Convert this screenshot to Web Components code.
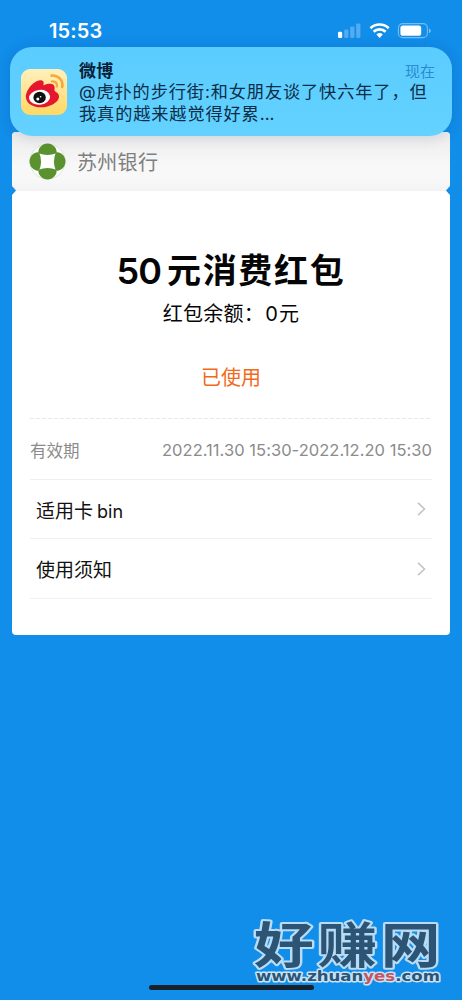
<!DOCTYPE html>
<html lang="zh-CN">
<head>
<meta charset="utf-8">
<title>消费红包</title>
<style>
html, body { margin: 0; height: 100%; overflow: hidden; background: #118dea; }
body { font-family: Inter, "Noto Sans CJK SC", sans-serif; }
</style>
</head>
<body>
<coupon-screen></coupon-screen>
<script>
const define = (name, html) => customElements.define(name, class extends HTMLElement {
  constructor() {
    super();
    const t = document.createElement('template');
    t.innerHTML = html;
    this.attachShadow({ mode: 'open' }).append(t.content.cloneNode(true));
  }
});

define('status-bar', `
<style>
:host { display: flex; box-sizing: border-box; height: 47px; padding: 19px 30px 0 49px; justify-content: space-between; align-items: flex-start; color: #fff; }
.time { font-size: 20px; line-height: 24px; font-weight: 600; letter-spacing: .1px; }
svg { display: block; }
</style>
<span class="time">15:53</span>
<svg width="94" height="24" viewBox="0 0 94 24">
  <rect x="0" y="12.8" width="4.2" height="6.2" rx="1.2" fill="#fff"/>
  <g fill="#fff" fill-opacity=".28"><rect x="6.2" y="10.6" width="4.2" height="8.4" rx="1.2"/><rect x="12.2" y="7.6" width="4.2" height="11.4" rx="1.2"/><rect x="18.2" y="4.4" width="4.2" height="14.6" rx="1.2"/></g>
  <g fill="none" stroke="#fff" stroke-width="2.7"><path d="M32.5 9.2a13 13 0 0 1 18.2 0"/><path d="M35.6 12.8a8.5 8.5 0 0 1 12 0"/></g>
  <path d="M38.4 15.500a4.700 4.700 0 0 1 6.400 0l-3.200 3.400z" fill="#fff"/>
  <rect x="60.4" y="4.600" width="29" height="14" rx="4.400" fill="none" stroke="#fff" stroke-opacity=".42" stroke-width="1.100"/>
  <rect x="62.400" y="6.400" width="20.800" height="10.400" rx="2.600" fill="#fff"/>
  <path d="M91 9.400c2.400 .8 2.400 3.800 0 4.600z" fill="#fff" fill-opacity=".45"/>
</svg>`);

define('weibo-icon', `
<style>:host { display: block; width: 46px; height: 46px; } svg { display: block; }</style>
<svg width="46" height="46" viewBox="0 0 46 46">
  <defs><linearGradient id="g" x2="0" y2="1"><stop stop-color="#fff0bd"/><stop offset="1" stop-color="#ffd863"/></linearGradient></defs>
  <rect width="46" height="46" rx="9" fill="url(#g)"/>
  <path d="M5 29C4 22 12 12 19 11.200c4-.5 4 2.800 3.300 5.200 4.500-2.500 12-2.900 11.300 3.100-.2 1.500-.4 2.300 1 3.200 9 5-1 15.600-14.600 15.600C12 38.300 5.600 34.700 5 29z" fill="#e6162d"/>
  <ellipse cx="18.600" cy="28.300" rx="10.600" ry="7.400" fill="#fff" transform="rotate(-6 18.600 28.300)"/>
  <ellipse cx="18.600" cy="28.500" rx="6.200" ry="5.700" fill="#111"/>
  <circle cx="16.800" cy="30" r="1.500" fill="#fff"/><circle cx="19.600" cy="27.800" r=".8" fill="#fff"/>
  <g fill="none" stroke="#f5a93c" stroke-width="2.600" stroke-linecap="round"><path d="M30.500 6.600c7-.6 12 5 10.700 11.500"/><path d="M31 12.400c3.500-.5 5.600 2.100 4.800 5.100" stroke-width="2.300"/></g>
</svg>`);

define('push-notice', `
<style>
:host { display: flex; box-sizing: border-box; position: relative; z-index: 2; width: 442px; height: 89px; margin: 0 10px; padding: 13px 17px 0 11px; gap: 12px; border-radius: 22px; background: linear-gradient(#5bccff, #63d2ff); box-shadow: 0 1px 14px rgba(0,40,90,.16); color: #0b2d47; }
weibo-icon { margin-top: 9px; }
.body { flex: 1; min-width: 0; }
.head { display: flex; justify-content: space-between; height: 21px; line-height: 22px; }
.name { font-size: 17px; font-weight: 700; color: #062036; letter-spacing: .3px; }
.when { font-size: 15px; color: #288bd0; line-height: 24px; }
</style>
<weibo-icon></weibo-icon>
<div class="body">
  <div class="head"><span class="name"><slot name="name"></slot></span><span class="when"><slot name="when"></slot></span></div>
  <slot></slot>
</div>`);

define('notice-line', `
<style>:host { display: block; height: 21.500px; line-height: 21px; font-size: 17.200px; letter-spacing: .880px; white-space: nowrap; }</style><slot></slot>`);

define('bank-header', `
<style>
:host { display: flex; box-sizing: border-box; height: 59px; padding: 0 17px; align-items: center; gap: 12px; background: linear-gradient(#eeeeee 10%, #f8f8f8 60%, #f8f8f8 80%, #f2f2f2); border-radius: 4px 4px 0 0; color: #7f7f7f; font-size: 20px; letter-spacing: .3px; }
svg { display: block; flex: none; }
slot { display: block; margin-left: -1px; }
</style>
<svg width="37" height="37" viewBox="0 0 37 37">
  <defs><path id="p" d="M9.500 10.200C8.500 5 13.500 .5 18.500 .5S28.500 5 27.500 10.200Q18.500 13.800 9.500 10.200z"/></defs>
  <circle cx="18.500" cy="18.500" r="17.500" fill="#fff" stroke="#cfdcc0" stroke-width=".7"/>
  <g fill="#5b9230"><use href="#p"/><use href="#p" transform="rotate(90 18.500 18.500)"/><use href="#p" transform="rotate(180 18.500 18.500)"/><use href="#p" transform="rotate(270 18.500 18.500)"/></g>
</svg>
<slot></slot>`);

define('coupon-summary', `
<style>
:host { display: flex; flex-direction: column; align-items: center; height: 227px; color: #050505; white-space: nowrap; }
.title { margin-top: 57px; height: 46px; line-height: 46px; font-size: 34px; font-weight: 700; letter-spacing: 1.700px; display: flex; gap: 6px; }
.num { font-size: 36px; font-weight: 600; letter-spacing: -1px; }
.bal { margin-top: 5px; height: 30px; line-height: 30px; font-size: 20px; letter-spacing: .300px; display: flex; gap: 1px; }
.state { margin-top: 34px; height: 30px; line-height: 30px; font-size: 20px; color: #f26a1b; }
</style>
<div class="title"><span class="num"><slot name="num"></slot></span><span><slot name="title"></slot></span></div>
<div class="bal"><slot name="balance"></slot></div>
<div class="state"><slot name="state"></slot></div>`);

define('valid-row', `
<style>
:host { display: flex; box-sizing: border-box; height: 62px; margin: 0 18px; padding-top: 2px; border-bottom: 1px solid #eee; align-items: center; justify-content: space-between; font-size: 16.500px; color: #8b8b8b; background: repeating-linear-gradient(90deg, #e8e8e8 0 4px, transparent 4px 6px) top / 100% 1px no-repeat; white-space: nowrap; }
.range { letter-spacing: .04px; }
</style><slot name="label"></slot><span class="range"><slot name="range"></slot></span>`);

define('link-row', `
<style>
:host { display: flex; box-sizing: border-box; height: 60px; margin: 0 18px; padding: 0 6px; border-bottom: 1px solid #f0f0f0; align-items: center; justify-content: space-between; font-size: 19px; color: #111; }
:host(.compact) { height: 59px; }
.label { display: flex; gap: 4px; align-items: baseline; }
.latin { font-size: 18px; }
svg { display: block; }
</style>
<span class="label"><slot></slot><span class="latin"><slot name="latin"></slot></span></span>
<svg width="9" height="14" viewBox="0 0 9 14"><path d="M1 .8 7.500 7 1 13.200" fill="none" stroke="#c4c4c4" stroke-width="1.600"/></svg>`);

define('coupon-card', `
<style>
:host { display: block; position: relative; width: 438px; height: 503px; margin: -4px 0 0 12px; background: #fff; border-radius: 4px; }
:host::before, :host::after { content: ""; position: absolute; top: 54px; width: 7px; height: 9px; background: #118dea; }
:host::before { left: -3px; clip-path: polygon(0 0, 43% 0, 100% 50%, 43% 100%, 0 100%); }
:host::after { right: -3px; clip-path: polygon(100% 0, 57% 0, 0 50%, 57% 100%, 100% 100%); }
</style><slot></slot>`);

define('site-watermark', `
<style>:host { display: block; position: absolute; left: 250px; top: 900px; } svg { display: block; }</style>
<svg width="200" height="92" viewBox="0 0 200 92">
  <g transform="translate(4 62.500) scale(1.220 1)">
    <text x="0" y="0" font-family="Noto Sans CJK SC, sans-serif" font-weight="700" font-size="49" letter-spacing="3" fill="#2c5475" stroke="#b8dcf5" stroke-width="4" stroke-linejoin="round" paint-order="stroke">好赚网</text>
  </g>
  <text x="6" y="81" font-family="DejaVu Sans, sans-serif" font-weight="700" font-size="14.500" textLength="184" lengthAdjust="spacingAndGlyphs" fill="#2c5475" stroke="#c6e3f7" stroke-width="3" stroke-linejoin="round" paint-order="stroke">www.zhuan<tspan fill="#c8545f">yes</tspan>.com</text>
</svg>`);

define('home-indicator', `
<style>:host { display: block; position: absolute; left: 149px; top: 985px; width: 165px; height: 5px; border-radius: 3px; background: #16212b; }</style>`);

define('coupon-screen', `
<style>
:host { display: block; position: relative; width: 462px; height: 1000px; overflow: hidden; background: #118dea; }
.dots { letter-spacing: 0; }
</style>
<status-bar></status-bar>
<push-notice>
  <span slot="name">微博</span><span slot="when">现在</span>
  <notice-line>@虎扑的步行街:和女朋友谈了快六年了，但</notice-line>
  <notice-line>我真的越来越觉得好累<span class="dots">...</span></notice-line>
</push-notice>
<coupon-card>
  <bank-header>苏州银行</bank-header>
  <coupon-summary><span slot="num">50</span><span slot="title">元消费红包</span><span slot="balance">红包余额：</span><span slot="balance">0</span><span slot="balance">元</span><span slot="state">已使用</span></coupon-summary>
  <valid-row><span slot="label">有效期</span><span slot="range">2022.11.30 15:30-2022.12.20 15:30</span></valid-row>
  <link-row class="compact">适用卡<span slot="latin">bin</span></link-row>
  <link-row>使用须知</link-row>
</coupon-card>
<home-indicator></home-indicator>
<site-watermark></site-watermark>`);
</script>
</body>
</html>
